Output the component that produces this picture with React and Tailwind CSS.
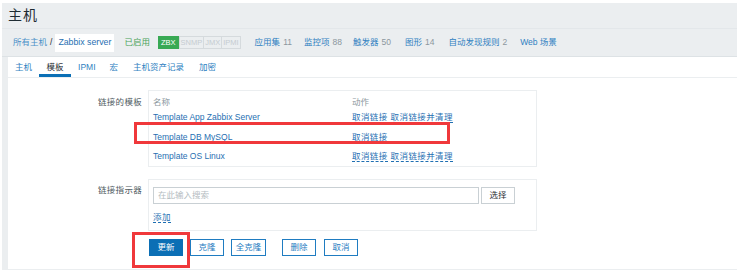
const cn = { fontFamily: '"Liberation Sans", "Noto Sans CJK SC", sans-serif' };

function NavLink({ label, count, className = '' }) {
  return (
    <span className={`text-[#2f7fc1] ${className}`}>
      {label}
      {count !== undefined && <span className="text-[#8b979e] ml-[3px]">{count}</span>}
    </span>
  );
}

function ActionLink({ children }) {
  return (
    <span className="text-[#1f6fb2] border-b border-dashed border-[#1f6fb2] leading-[10px] tracking-[0.4px]">{children}</span>
  );
}

const templates = [
  { name: 'Template App Zabbix Server', clear: true },
  { name: 'Template DB MySQL', clear: false },
  { name: 'Template OS Linux', clear: true },
];

export default function App() {
  return (
    <div className="relative w-[742px] h-[278px] bg-white pt-[3px] pl-[2px] text-[8.5px]" style={cn}>
      <div className="w-[735px] bg-[#ebeef0] pb-[1px]">
        <div className="h-[26px] border-b border-[#e3e7ea] pl-[6px] flex items-center">
          <h1 className="text-[14px] text-[#1f2c33] tracking-[1px]">主机</h1>
        </div>
        <div className="h-[28px] border-b border-[#dde2e5] flex items-center pl-[11px]">
          <span className="text-[#4a90c8]">所有主机</span>
          <span className="mx-[3px] text-[#1f2c33]">/</span>
          <span className="bg-white h-[18px] px-[3px] flex items-center text-[#1f6fb2] text-[8.75px]">Zabbix server</span>
          <span className="ml-[10px] text-[#4aa35a]">已启用</span>
          <div className="ml-[8px] flex h-[13px] text-[7.5px]">
            <span className="bg-[#38a954] text-white px-[3px] flex items-center">ZBX</span>
            <span className="border border-[#d5dadd] text-[#c5ccd0] px-[1px] flex items-center">SNMP</span>
            <span className="border-y border-r border-[#d5dadd] text-[#c5ccd0] px-[1px] flex items-center">JMX</span>
            <span className="border-y border-r border-[#d5dadd] text-[#c5ccd0] px-[1px] flex items-center">IPMI</span>
          </div>
          <NavLink className="ml-[14px]" label="应用集" count="11" />
          <NavLink className="ml-[12px]" label="监控项" count="88" />
          <NavLink className="ml-[11px]" label="触发器" count="50" />
          <NavLink className="ml-[14px]" label="图形" count="14" />
          <NavLink className="ml-[14px]" label="自动发现规则" count="2" />
          <span className="ml-[13px] text-[#2f7fc1]">Web 场景</span>
        </div>
        <div className="ml-[6px] bg-white h-[212px]">
          <div className="h-[21px] border-b border-[#ebeef0] flex items-stretch">
            <span className="px-[7px] flex items-center text-[#2f7fc1]">主机</span>
            <span className="px-[7px] flex items-center text-[#1f2c33] border-b-[3px] border-[#0b6fb5] pt-[3px] w-[32px] justify-center">模板</span>
            <span className="px-[7px] flex items-center text-[#2f7fc1]">IPMI</span>
            <span className="px-[7px] flex items-center text-[#2f7fc1]">宏</span>
            <span className="px-[8px] flex items-center text-[#2f7fc1]">主机资产记录</span>
            <span className="px-[7px] flex items-center text-[#2f7fc1]">加密</span>
          </div>

          <div className="flex mt-[12px]">
            <div className="w-[140px] pr-[6px] text-right text-[#4f5b61] pt-[6px] tracking-[0.3px]">链接的模板</div>
            <div className="w-[389px] h-[77px] border border-[#ebeef0] px-[4px] pt-[5px]">
              <div className="flex h-[12px] items-center text-[#8b979e]">
                <span className="w-[199px]">名称</span>
                <span>动作</span>
              </div>
              {templates.map((t) => (
                <div key={t.name} className="flex h-[19.5px] items-center">
                  <span className="w-[199px] text-[#1f6fb2]">{t.name}</span>
                  <span className="flex gap-[3px]">
                    <ActionLink>取消链接</ActionLink>
                    {t.clear && <ActionLink>取消链接并清理</ActionLink>}
                  </span>
                </div>
              ))}
            </div>
          </div>

          <div className="flex mt-[12px]">
            <div className="w-[140px] pr-[6px] text-right text-[#4f5b61] pt-[5px] tracking-[0.3px]">链接指示器</div>
            <div className="w-[389px] h-[52px] border border-[#ebeef0] px-[4px] pt-[7px]">
              <div className="flex gap-[2px]">
                <div className="w-[326px] h-[17px] border border-[#c9d0d4] flex items-center px-[4px] text-[#b4bcc1]">在此输入搜索</div>
                <div className="w-[34px] h-[17px] border border-[#c9d0d4] flex items-center justify-center text-[#1f2c33]">选择</div>
              </div>
              <div className="mt-[7px]">
                <ActionLink>添加</ActionLink>
              </div>
            </div>
          </div>

          <div className="flex mt-[8px] ml-[141px] gap-[7px] h-[17px]">
            <div className="w-[34px] bg-[#0b6fb5] text-white flex items-center justify-center">更新</div>
            <div className="w-[34px] border border-[#1f7cc1] text-[#1f7cc1] flex items-center justify-center">克隆</div>
            <div className="w-[35px] border border-[#1f7cc1] text-[#1f7cc1] flex items-center justify-center">全克隆</div>
            <div className="w-[34px] ml-[9px] border border-[#1f7cc1] text-[#1f7cc1] flex items-center justify-center">删除</div>
            <div className="w-[34px] ml-[1px] border border-[#1f7cc1] text-[#1f7cc1] flex items-center justify-center">取消</div>
          </div>
        </div>
      </div>

      <div className="absolute left-[134px] top-[122px] w-[316px] h-[22px] border-[3px] border-[#f0383b]" />
      <div className="absolute left-[132px] top-[232px] w-[58px] h-[36px] border-[3px] border-[#f0383b]" />
    </div>
  );
}
